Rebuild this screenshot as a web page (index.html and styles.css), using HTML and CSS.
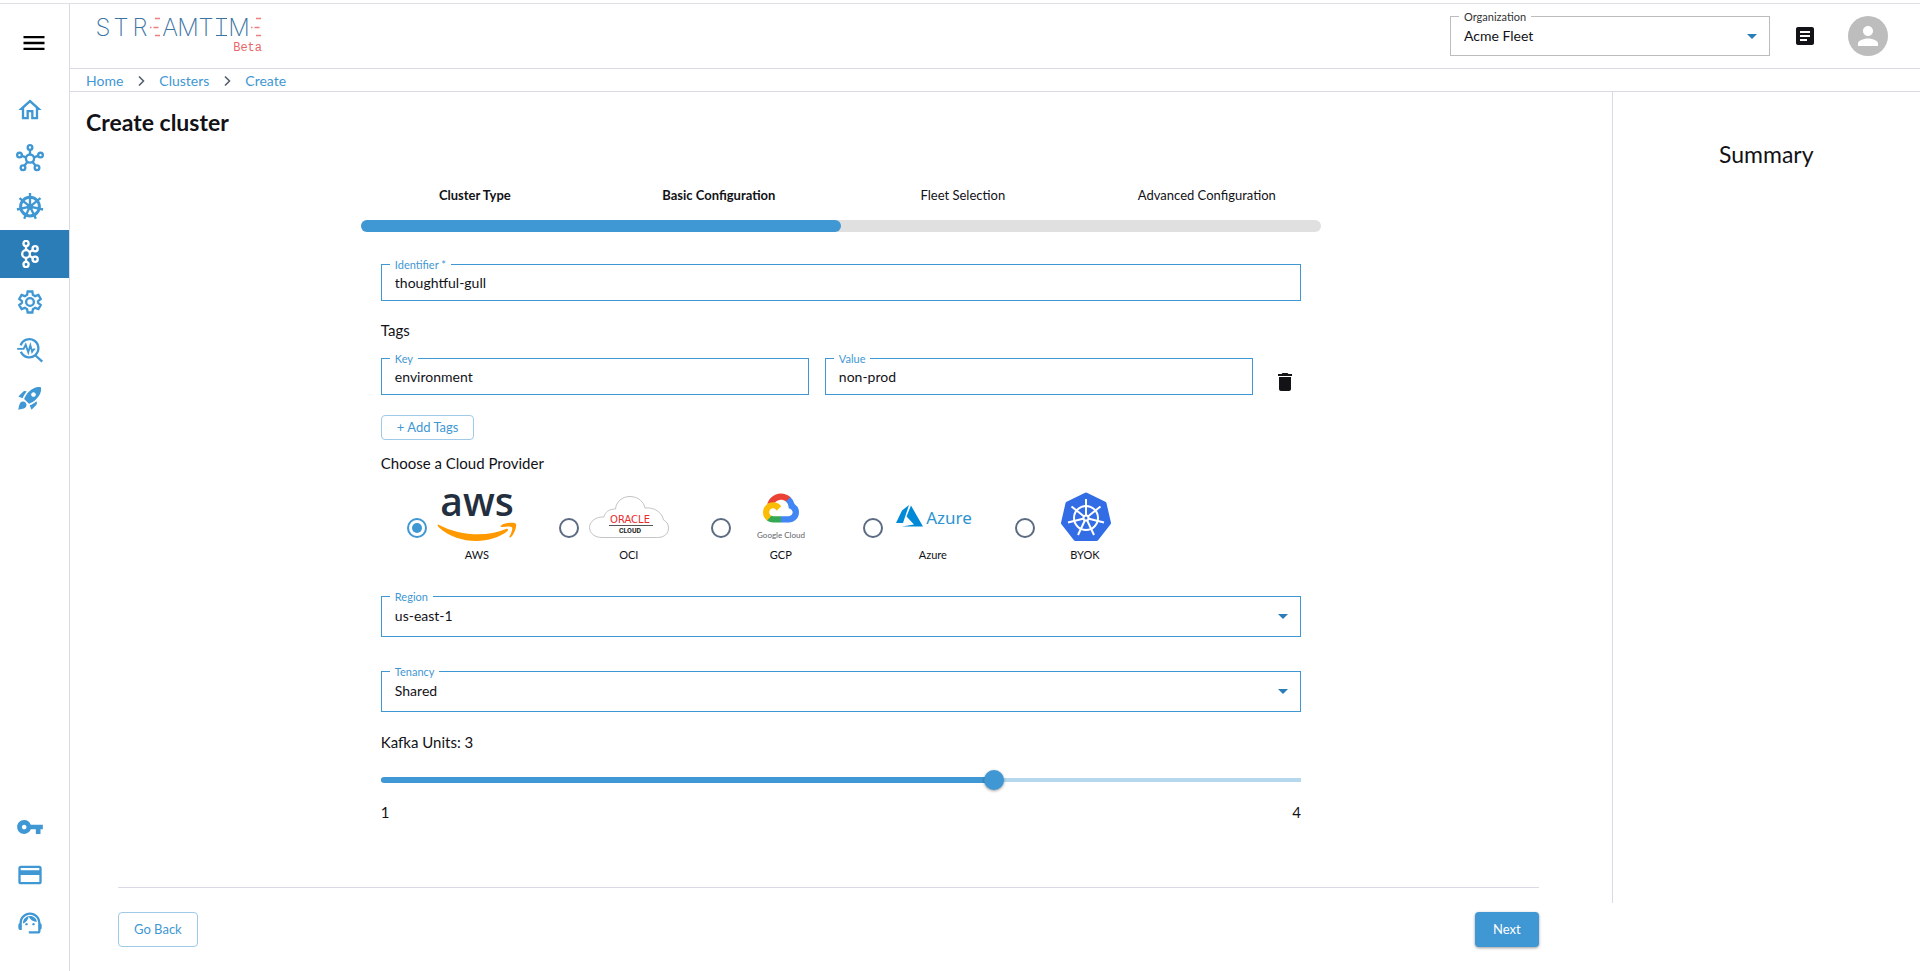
FILE: index.html
```html
<!DOCTYPE html>
<html lang="en">
<head>
    <meta charset="UTF-8">
    <meta name="viewport" content="width=device-width, initial-scale=1.0">
    <title>Create cluster | Streamtime</title>
    <link rel="stylesheet" href="styles.css">
</head>
<body>
    <div class="app">
        <aside class="sidebar">
            <button class="menu-btn" aria-label="Toggle menu">
                <svg class="icon" viewBox="0 0 24 24"><path d="M3 18h18v-2H3v2zm0-5h18v-2H3v2zm0-7v2h18V6H3z"/></svg>
            </button>
            <nav class="nav">
                <a href="#" aria-label="Home">
                    <svg class="icon" viewBox="0 0 24 24"><path d="M12 5.69l5 4.5V18h-2v-6H9v6H7v-7.81l5-4.5M12 3L2 12h3v8h6v-6h2v6h6v-8h3L12 3z"/></svg>
                </a>
                <a href="#" aria-label="Fleets">
                    <svg class="icon line" viewBox="0 0 24 24">
                        <circle cx="12" cy="12.500" r="3.500"/>
                        <circle cx="12" cy="3" r="2"/><circle cx="3" cy="9.500" r="2"/><circle cx="21" cy="9.500" r="2"/>
                        <circle cx="6" cy="20.300" r="2"/><circle cx="18" cy="20.300" r="2"/>
                        <path d="M12 5v4M5 10.100l3.800 1.400M19 10.100l-3.800 1.400M7.200 18.700l2.700-3.500M16.800 18.700l-2.700-3.500"/>
                    </svg>
                </a>
                <a href="#" aria-label="Kubernetes">
                    <svg class="icon line" viewBox="0 0 24 24">
                        <circle cx="12" cy="12.500" r="8" stroke-width="2.600"/>
                        <circle cx="12" cy="12.500" r="1.700"/>
                        <path d="M12 .8v10M12 12.500l9-7.200M12 12.500l11.200 2.500M12 12.500l5 10.500M12 12.500l-5 10.500M12 12.500L.8 15M12 12.500L3 5.300"/>
                    </svg>
                </a>
                <a href="#" class="active" aria-label="Clusters">
                    <svg class="icon line" viewBox="0 0 24 24">
                        <circle cx="8.600" cy="12" r="3.300"/>
                        <circle cx="8.600" cy="3" r="2.200"/><circle cx="8.600" cy="21" r="2.200"/>
                        <circle cx="16.400" cy="7.500" r="2.200"/><circle cx="16.400" cy="16.500" r="2.200"/>
                        <path d="M8.600 5.200v3.500M8.600 15.300v3.500M11.500 10.400l3-1.800M11.500 13.600l3 1.800"/>
                    </svg>
                </a>
                <a href="#" aria-label="Settings">
                    <svg class="icon line" viewBox="0 0 24 24">
                        <circle cx="12" cy="12" r="3.300"/>
                        <path d="M10 3h4l.5 2.900 1.900 1.100 2.800-1 2 3.400-2.300 1.900v1.400l2.300 1.900-2 3.400-2.800-1-1.900 1.100L14 21h-4l-.5-2.900L7.600 17l-2.800 1-2-3.400 2.300-1.900v-1.400L2.800 9.400l2-3.400 2.800 1 1.900-1.100z"/>
                    </svg>
                </a>
                <a href="#" aria-label="Monitoring">
                    <svg class="icon line" viewBox="0 0 24 24">
                        <path d="M4 8a7.800 7.800 0 1 1 .2 5.500M16.500 16.500l6 5.500"/>
                        <path stroke-width="1.600" d="M1 11h5.500l1.800-3.500 2.200 6.500L12.300 8l1.500 5.500 1.200-2h1.500"/>
                    </svg>
                </a>
                <a href="#" aria-label="Deployments">
                    <svg class="icon" viewBox="0 0 24 24"><path d="M9.190 6.350c-2.040 2.290-3.440 5.580-3.570 5.890L2 10.690l4.050-4.050c.47-.47 1.150-.68 1.810-.55l1.330.26zM11.170 17s3.740-1.550 5.890-3.700c5.400-5.400 4.500-9.620 4.210-10.570-.95-.3-5.170-1.190-10.570 4.210C8.550 9.090 7 12.830 7 12.830L11.170 17zm6.480-2.190c-2.290 2.040-5.580 3.440-5.890 3.570L13.310 22l4.050-4.050c.47-.47.68-1.150.55-1.810l-.26-1.330zM9 18c0 .83-.34 1.580-.88 2.120C6.940 21.300 2 22 2 22s.7-4.940 1.880-6.120C4.420 15.340 5.170 15 6 15c1.660 0 3 1.340 3 3zm4-9c0-1.100.9-2 2-2s2 .9 2 2-.9 2-2 2-2-.9-2-2z"/></svg>
                </a>
            </nav>
            <nav class="nav nav-bottom">
                <a href="#" aria-label="API keys">
                    <svg class="icon" viewBox="0 0 24 24"><path d="M12.650 10C11.830 7.670 9.610 6 7 6c-3.310 0-6 2.690-6 6s2.690 6 6 6c2.610 0 4.830-1.670 5.650-4H17v4h4v-4h2v-4H12.650zM7 14c-1.100 0-2-.9-2-2s.9-2 2-2 2 .9 2 2-.9 2-2 2z"/></svg>
                </a>
                <a href="#" aria-label="Billing">
                    <svg class="icon" viewBox="0 0 24 24"><path d="M20 4H4c-1.110 0-1.990.89-1.990 2L2 18c0 1.110.89 2 2 2h16c1.110 0 2-.89 2-2V6c0-1.110-.89-2-2-2zm0 14H4v-6h16v6zm0-10H4V6h16v2z"/></svg>
                </a>
                <a href="#" aria-label="Support">
                    <svg class="icon" viewBox="0 0 24 24"><path d="M21 12.220C21 6.730 16.740 3 12 3c-4.690 0-9 3.650-9 9.280-.6.340-1 .98-1 1.720v2c0 1.100.9 2 2 2h1v-6.100c0-3.870 3.130-7 7-7s7 3.130 7 7V19h-8v2h8c1.100 0 2-.9 2-2v-1.220c.59-.31 1-.92 1-1.640v-2.300c0-.7-.41-1.310-1-1.620z"/><circle cx="9" cy="13" r="1"/><circle cx="15" cy="13" r="1"/><path d="M18 11.030C17.520 8.180 15.040 6 12.050 6c-3.030 0-6.290 2.510-6.030 6.450 2.470-1.010 4.330-3.210 4.860-5.890 1.310 2.630 4 4.440 7.120 4.470z"/></svg>
                </a>
            </nav>
        </aside>

        <div class="page">
            <header class="header">
                <a href="#" class="logo" aria-label="Streamtime">
                    <svg width="166" height="36" viewBox="0 -8 166 36">
                        <g class="logo-text">
                            <text x="7" y="21">S</text>
                            <text x="25" y="21">T</text>
                            <text x="44" y="21">R</text>
                            <text x="74" y="21">A</text>
                            <text x="92" y="21">M</text>
                            <text x="110" y="21">T</text>
                            <text x="125" y="21">I</text>
                            <text x="143" y="21">M</text>
                        </g>
                        <path class="logo-serif" d="M120 3.500h11M120 20.500h11"/>
                        <path class="logo-dash" d="M59 3.500h5M54 12.500h1.500M57.500 12.500h5M59 20.500h5M160 3.500h5M155 12.500h1.500M158.500 12.500h5M160 20.500h5"/>
                    </svg>
                    <span class="beta">Beta</span>
                </a>
                <div class="header-tools">
                    <div class="field field-org">
                        <label for="org">Organization</label>
                        <select id="org"><option>Acme Fleet</option></select>
                    </div>
                    <button class="icon-btn" aria-label="Docs">
                        <svg viewBox="0 0 24 24"><path d="M19 3H5c-1.100 0-2 .9-2 2v14c0 1.100.9 2 2 2h14c1.100 0 2-.9 2-2V5c0-1.100-.9-2-2-2zm-5 14H7v-2h7v2zm3-4H7v-2h10v2zm0-4H7V7h10v2z"/></svg>
                    </button>
                    <button class="avatar" aria-label="Account">
                        <svg viewBox="0 0 24 24"><path d="M12 12c2.210 0 4-1.790 4-4s-1.790-4-4-4-4 1.790-4 4 1.790 4 4 4zm0 2c-2.670 0-8 1.340-8 4v2h16v-2c0-2.660-5.330-4-8-4z"/></svg>
                    </button>
                </div>
            </header>

            <nav class="breadcrumb" aria-label="Breadcrumb">
                <a href="#">Home</a>
                <svg viewBox="0 0 8 12"><path d="M2 1.500L6.500 6 2 10.500"/></svg>
                <a href="#">Clusters</a>
                <svg viewBox="0 0 8 12"><path d="M2 1.500L6.500 6 2 10.500"/></svg>
                <a href="#">Create</a>
            </nav>

            <div class="content">
                <main class="main">
                    <h1>Create cluster</h1>

                    <form class="wizard">
                        <ol class="steps">
                            <li class="done">Cluster Type</li>
                            <li class="done">Basic Configuration</li>
                            <li>Fleet Selection</li>
                            <li>Advanced Configuration</li>
                        </ol>
                        <div class="progress"><div class="progress-bar" style="width: 50%"></div></div>

                        <div class="form-body">
                            <div class="field">
                                <label for="identifier">Identifier *</label>
                                <input type="text" id="identifier" value="thoughtful-gull">
                            </div>

                            <h2 class="tags-title">Tags</h2>
                            <div class="tag-row">
                                <div class="field">
                                    <label for="tag-key">Key</label>
                                    <input type="text" id="tag-key" value="environment">
                                </div>
                                <div class="field">
                                    <label for="tag-value">Value</label>
                                    <input type="text" id="tag-value" value="non-prod">
                                </div>
                                <button type="button" class="icon-btn delete-btn" aria-label="Delete tag">
                                    <svg viewBox="0 0 24 24"><path d="M6 19c0 1.100.9 2 2 2h8c1.100 0 2-.9 2-2V7H6v12zM19 4h-3.500l-1-1h-5l-1 1H5v2h14V4z"/></svg>
                                </button>
                            </div>
                            <button type="button" class="btn btn-outline btn-small">+ Add Tags</button>

                            <h2 class="provider-title">Choose a Cloud Provider</h2>
                            <div class="providers">
                                <label class="provider">
                                    <input type="radio" name="provider" checked>
                                    <span class="provider-card">
                                        <svg width="80" height="72" viewBox="0 -16 80 72">
                                            <text class="aws-text" x="40" y="26">aws</text>
                                            <path fill="#ff9900" d="M1 34.500c-1 .5 0 2 1 3C12 46.500 26 51 39 51c12 0 24-4 31-9.500 2-1.500 1-3.500-1-2.500C50 47 24 46.500 1 34.500z"/>
                                            <path fill="#ff9900" d="M64 35.500c4-3 14-3.500 15-1.500.7 2-1 9-5 13-1 1-2 .5-1.500-.5 1.500-3 3.500-7.500 2.500-9-1-1.500-6-1-10-.6-1.500.1-2-.6-1-1.400z"/>
                                        </svg>
                                        <span>AWS</span>
                                    </span>
                                </label>
                                <label class="provider">
                                    <input type="radio" name="provider">
                                    <span class="provider-card">
                                        <svg width="80" height="72" viewBox="0 -16 80 72">
                                            <path fill="#fff" stroke="#c4c4c4" d="M13 47.500C6 47.500.5 43.500.5 37.500S7 26.500 15 27c1-5 5-8 11.500-8C27 12 33 6.500 41 6.500S55 12 56 18c9-1 17 4 18.500 12 3 1.500 5 4 5 8 0 5.500-4 9.500-11 9.500z"/>
                                            <text class="oracle-text" x="41" y="33">ORACLE</text>
                                            <path stroke="#555" d="M20 35.500h44"/>
                                            <text class="oracle-sub" x="41" y="43">CLOUD</text>
                                        </svg>
                                        <span>OCI</span>
                                    </span>
                                </label>
                                <label class="provider">
                                    <input type="radio" name="provider">
                                    <span class="provider-card">
                                        <svg width="80" height="72" viewBox="0 -16 80 72">
                                            <svg x="22" y="3" width="36" height="30" viewBox="0 0 256 206">
                                                <path fill="#ea4335" d="M170.252 56.819l22.253-22.253 1.483-9.370C153.437-11.677 88.976-7.496 52.420 33.920 42.267 45.423 34.734 59.764 30.717 74.573l7.970-1.123 44.505-7.340 3.436-3.513c19.797-21.742 53.270-24.667 76.128-6.168l7.496.39z"/>
                                                <path fill="#4285f4" d="M224.205 73.918a100.249 100.249 0 0 0-30.217-48.722l-31.232 31.232a55.515 55.515 0 0 1 20.379 44.037v5.544c15.350 0 27.797 12.445 27.797 27.796 0 15.352-12.446 27.485-27.797 27.485h-55.671l-5.466 5.934v33.340l5.466 5.231h55.670c39.930.311 72.553-31.494 72.864-71.424a72.303 72.303 0 0 0-31.793-60.453"/>
                                                <path fill="#34a853" d="M71.870 205.796h55.593V161.290H71.870a27.275 27.275 0 0 1-11.477-2.498l-7.887 2.420-22.409 22.253-1.952 7.574a71.910 71.910 0 0 0 43.725 14.757"/>
                                                <path fill="#fbbc05" d="M71.870 61.425C31.940 61.664-.237 94.228.001 134.158a72.301 72.301 0 0 0 28.222 56.880l32.248-32.246c-13.990-6.322-20.208-22.786-13.887-36.776 6.320-13.990 22.786-20.208 36.775-13.888a27.796 27.796 0 0 1 13.887 13.888l32.248-32.248A72.224 72.224 0 0 0 71.870 61.425"/>
                                            </svg>
                                            <text class="gcp-text" x="40" y="48">Google Cloud</text>
                                        </svg>
                                        <span>GCP</span>
                                    </span>
                                </label>
                                <label class="provider">
                                    <input type="radio" name="provider">
                                    <span class="provider-card">
                                        <svg width="80" height="72" viewBox="0 -16 80 72">
                                            <path fill="#0089d6" d="M16 15L9 20.500 3 33h7zM18 15.500l-4.500 11 7.500 8-12 2h21z"/>
                                            <text class="azure-text" x="56" y="34">Azure</text>
                                        </svg>
                                        <span>Azure</span>
                                    </span>
                                </label>
                                <label class="provider">
                                    <input type="radio" name="provider">
                                    <span class="provider-card">
                                        <svg width="80" height="72" viewBox="0 -16 80 72">
                                            <path fill="#326de6" stroke="#326de6" stroke-width="4" stroke-linejoin="round" d="M41 4.500L59.500 13.500 64 33 51.500 49h-21L18 33l4.500-19.500z"/>
                                            <g fill="none" stroke="#fff" stroke-width="2">
                                                <circle cx="41" cy="28" r="12"/>
                                                <path d="M41 9v17M41 28l14.500-11.500M41 28l18 4.500M41 28l8 17M41 28l-8 17M41 28l-18 4.500M41 28L26.500 16.500"/>
                                            </g>
                                            <circle cx="41" cy="28" r="3.500" fill="#fff"/>
                                            <circle cx="41" cy="28" r="1.500" fill="#326de6"/>
                                        </svg>
                                        <span>BYOK</span>
                                    </span>
                                </label>
                            </div>

                            <div class="field field-select">
                                <label for="region">Region</label>
                                <select id="region"><option>us-east-1</option></select>
                            </div>
                            <div class="field field-select">
                                <label for="tenancy">Tenancy</label>
                                <select id="tenancy"><option>Shared</option></select>
                            </div>

                            <label class="units-label" for="units">Kafka Units: 3</label>
                            <div class="slider">
                                <div class="slider-fill" style="width: 66.67%"></div>
                                <input type="range" id="units" min="1" max="4" value="3">
                            </div>
                            <div class="slider-marks"><span>1</span><span>4</span></div>
                        </div>
                    </form>

                    <div class="actions">
                        <button type="button" class="btn btn-outline">Go Back</button>
                        <button type="button" class="btn btn-primary">Next</button>
                    </div>
                </main>
                <aside class="summary">
                    <h2>Summary</h2>
                </aside>
            </div>
        </div>
    </div>
</body>
</html>
```
FILE: styles.css
```css
* {
    box-sizing: border-box;
}

body {
    margin: 0;
    font-family: Lato, "Liberation Sans", sans-serif;
    font-size: 15px;
    line-height: 20px;
    color: #121217;
    background: #fff;
}

h1, h2, ol {
    margin: 0;
    padding: 0;
    font-weight: 400;
}

a {
    color: #3f97d3;
    text-decoration: none;
}

button {
    font-family: inherit;
    cursor: pointer;
}

.app {
    display: flex;
    min-height: calc(100vh - 3px);
    margin-top: 3px;
    border-top: 1px solid #dfe0e6;
}

/* Sidebar */
.sidebar {
    display: flex;
    flex-direction: column;
    flex: none;
    width: 70px;
    border-right: 1px solid #d9dae6;
}

.menu-btn {
    display: flex;
    justify-content: center;
    padding: 25px 2px 29px 0;
    border: none;
    background: none;
}

.icon {
    width: 28px;
    height: 28px;
    fill: currentColor;
}

.icon.line {
    fill: none;
    stroke: currentColor;
    stroke-width: 2;
}

.nav a {
    display: flex;
    align-items: center;
    height: 48px;
    padding-left: 16px;
}

.nav a.active {
    background: #2a7db7;
    color: #fff;
}

.nav-bottom {
    margin-top: auto;
    padding-bottom: 24px;
}

/* Header */
.page {
    flex: 1;
    min-width: 0;
}

.header {
    display: flex;
    justify-content: space-between;
    height: 65px;
    padding: 0 32px 0 26px;
    border-bottom: 1px solid #d9dae6;
}

.logo {
    display: flex;
    flex-direction: column;
    align-items: flex-end;
    padding-top: 3px;
}

.logo-text {
    font-family: Inter, sans-serif;
    font-size: 24px;
    font-weight: 200;
    fill: #3b75a3;
    text-anchor: middle;
}

.logo-serif {
    stroke: #3b75a3;
}

.logo-dash {
    stroke: #ee7f80;
    stroke-width: 1.5;
}

.beta {
    font-family: "Liberation Mono", monospace;
    font-size: 12px;
    line-height: 10px;
    color: #e8666a;
}

.header-tools {
    display: flex;
    align-items: center;
    gap: 23px;
    height: 64px;
}

.icon-btn {
    padding: 0;
    border: none;
    background: none;
    line-height: 0;
}

.icon-btn svg {
    width: 24px;
    height: 24px;
    fill: #121217;
}

.avatar {
    display: flex;
    align-items: center;
    justify-content: center;
    width: 40px;
    height: 40px;
    margin-left: 8px;
    padding: 0;
    border: none;
    border-radius: 50%;
    background: #bdbdbd;
}

.avatar svg {
    width: 30px;
    height: 30px;
    fill: #fff;
}

.breadcrumb {
    display: flex;
    align-items: center;
    gap: 14px;
    height: 23px;
    padding: 1px 16px 0;
    border-bottom: 1px solid #d9dae6;
    font-size: 14px;
}

.breadcrumb svg {
    width: 8px;
    height: 12px;
    fill: none;
    stroke: #555f70;
    stroke-width: 1.6;
}

/* Fields */
.field {
    position: relative;
}

.field label {
    position: absolute;
    top: -6px;
    left: 9px;
    padding: 0 5px;
    font-size: 11px;
    line-height: 14px;
    color: #3f97d3;
    background: #fff;
}

.field input,
.field select {
    display: block;
    width: 100%;
    height: 37px;
    padding: 0 13px;
    border: 1px solid #3f97d3;
    border-radius: 0;
    background: none;
    color: #121217;
    font-family: inherit;
    font-size: 14px;
    outline: none;
}

.field select {
    height: 41px;
    padding-bottom: 2px;
    appearance: none;
}

.field-org::after,
.field-select::after {
    content: "";
    position: absolute;
    top: 18px;
    right: 13px;
    border: 5px solid transparent;
    border-top-color: #2a7db7;
    border-bottom: none;
}

.field-org {
    width: 320px;
}

.field-org select {
    height: 40px;
    border-color: #bdbdbd;
}

.field-org label {
    color: #333;
}

/* Content */
.content {
    display: grid;
    grid-template-columns: 5fr 1fr;
    align-items: start;
}

.main {
    padding: 15px 16px;
}

h1 {
    font-size: 23px;
    line-height: 30px;
    font-weight: 700;
}

.summary {
    height: calc(100vh - 160px);
    padding-top: 47px;
    border-left: 1px solid #d9dae6;
}

.summary h2 {
    font-size: 23px;
    line-height: 30px;
    text-align: center;
}

/* Wizard */
.wizard {
    max-width: 976px;
    margin: 48px auto 0;
}

.steps {
    display: grid;
    grid-template-columns: repeat(4, 1fr);
    list-style: none;
    font-size: 13px;
    text-align: center;
}

.steps .done {
    font-weight: 700;
}

.progress {
    height: 12px;
    margin: 15px 8px 0;
    border-radius: 6px;
    background: #e0e0e0;
}

.progress-bar {
    height: 100%;
    border-radius: 6px;
    background: #3f97d3;
}

.form-body {
    padding: 32px 28px 0;
}

.form-body h2 {
    font-size: 15px;
}

.form-body .tags-title {
    margin: 19px 0 18px;
}

.tag-row {
    display: grid;
    grid-template-columns: 1fr 1fr 32px;
    gap: 16px;
}

.delete-btn {
    align-self: end;
    padding-bottom: 1px;
}

.btn {
    height: 35px;
    padding: 0 15px 1px;
    border: none;
    border-radius: 4px;
    font-size: 13px;
}

.btn-outline {
    border: 1px solid #9fcbe9;
    background: #fff;
    color: #3f97d3;
}

.btn-small {
    display: block;
    height: 25px;
    margin-top: 20px;
}

.btn-primary {
    padding: 0 18px 1px;
    background: #3f97d3;
    color: #fff;
    box-shadow: 0 1px 3px rgba(0, 0, 0, 0.4);
}

.form-body .provider-title {
    margin-top: 13px;
}

/* Cloud providers */
.providers {
    display: flex;
    margin: 1px 0 32px 26px;
}

.provider {
    display: flex;
    align-items: center;
    gap: 10px;
    width: 152px;
}

.provider input {
    appearance: none;
    display: grid;
    place-content: center;
    width: 20px;
    height: 20px;
    margin: 18px 0 0;
    border: 2px solid #5c6b82;
    border-radius: 50%;
}

.provider input:checked {
    border-color: #3f97d3;
}

.provider input:checked::before {
    content: "";
    width: 10px;
    height: 10px;
    border-radius: 50%;
    background: #3f97d3;
}

.provider-card {
    display: flex;
    flex-direction: column;
    align-items: center;
    font-size: 11px;
    line-height: 18px;
}

.provider-card text {
    text-anchor: middle;
}

.aws-text {
    font: 600 39px "Open Sans", sans-serif;
    fill: #232f3e;
}

.oracle-text {
    font: 10px "DejaVu Sans", sans-serif;
    fill: #ea2c2e;
}

.oracle-sub {
    font: 700 7px Roboto, sans-serif;
    fill: #222;
}

.gcp-text {
    font: 8px Lato, sans-serif;
    fill: #5f6368;
}

.azure-text {
    font: 17px "Noto Sans", sans-serif;
    fill: #2b94d1;
}

.field-select + .field-select {
    margin-top: 34px;
}

/* Slider */
.units-label {
    display: block;
    margin-top: 20px;
}

.slider {
    position: relative;
    height: 20px;
    margin-top: 18px;
    background: linear-gradient(#b5d8ee, #b5d8ee) center / 100% 4px no-repeat;
}

.slider-fill {
    position: absolute;
    top: 7px;
    left: 0;
    height: 6px;
    border-radius: 3px;
    background: #3f97d3;
}

/* Wider than the rail, so the thumb centre reaches both ends */
.slider input {
    position: relative;
    display: block;
    width: calc(100% + 20px);
    height: 20px;
    margin: 0 -10px;
    background: none;
    appearance: none;
}

.slider input::-webkit-slider-thumb {
    appearance: none;
    width: 20px;
    height: 20px;
    border-radius: 50%;
    background: #3f97d3;
    box-shadow: 0 1px 3px rgba(0, 0, 0, 0.4);
}

.slider-marks {
    display: flex;
    justify-content: space-between;
    margin-top: 12px;
}

.actions {
    display: flex;
    justify-content: space-between;
    margin: 65px 57px 0 32px;
    padding-top: 24px;
    border-top: 1px solid #d9dae6;
}
```
